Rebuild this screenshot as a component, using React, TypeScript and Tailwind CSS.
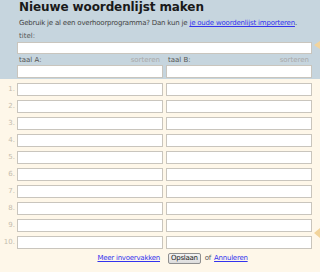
import React from "react";

const rows = [1, 2, 3, 4, 5, 6, 7, 8, 9, 10];

export default function App() {
  return (
    <div className="relative w-[320px] h-[272px] overflow-hidden bg-[#fef7e9] font-['DejaVu_Sans',sans-serif] text-[#333]">
      {/* kop */}
      <div className="bg-[#c6d5de] pl-[17px] pr-[8px] pt-[1px] pb-[1px]">
        <h1 className="pl-[2px] text-[12px] leading-[13px] font-bold tracking-[-0.1px] text-[#1a1a1a]">
          Nieuwe woordenlijst maken
        </h1>
        <p className="pl-[2px] mt-[5px] text-[7px] leading-[9px] tracking-[-0.2px] whitespace-nowrap text-[#444]">
          Gebruik je al een overhoorprogramma? Dan kun je{" "}
          <a href="#" className="text-[#3333ee] underline">
            je oude woordenlijst importeren
          </a>
          .
        </p>
        <div className="pl-[2px] mt-[4px] text-[7px] leading-[9px] text-[#555]">titel:</div>
        <input className="mt-[1px] block w-full h-[12px] bg-white border border-[#c9c5bd] outline-none" />
        <div className="mt-[2px] grid grid-cols-2 gap-[3px]">
          <div>
            <div className="flex justify-between px-[2px] pr-[3px] text-[7px] leading-[9px]">
              <span className="text-[#555]">taal A:</span>
              <span className="text-[#a9a9a9]">sorteren</span>
            </div>
            <input className="block w-full h-[13px] bg-white border border-[#c9c5bd] outline-none" />
          </div>
          <div>
            <div className="flex justify-between px-[2px] pr-[3px] text-[7px] leading-[9px]">
              <span className="text-[#555]">taal B:</span>
              <span className="text-[#a9a9a9]">sorteren</span>
            </div>
            <input className="block w-full h-[13px] bg-white border border-[#c9c5bd] outline-none" />
          </div>
        </div>
      </div>

      {/* woorden */}
      <div className="pt-[4px] pr-[8px] flex flex-col gap-[4px]">
        {rows.map((n) => (
          <div key={n} className="flex items-center">
            <span className="w-[17px] pr-[2px] text-right text-[7px] leading-[9px] text-[#c4bcae]">
              {n}.
            </span>
            <div className="flex-1 grid grid-cols-2 gap-[3px]">
              <input className="block w-full h-[13px] bg-white border border-[#c9c5bd] outline-none" />
              <input className="block w-full h-[13px] bg-white border border-[#c9c5bd] outline-none" />
            </div>
          </div>
        ))}
      </div>

      {/* knoppen */}
      <div className="mt-[4px] pl-[17px] pr-[8px] grid grid-cols-2 gap-[3px] text-[7px] leading-[9px] tracking-[-0.25px]">
        <div className="flex justify-end items-center pr-[3px]">
          <a href="#" className="text-[#3333ee] underline">
            Meer invoervakken
          </a>
        </div>
        <div className="flex items-center pl-[2px] gap-[4px]">
          <button className="h-[11px] px-[2px] text-[7px] leading-[9px] tracking-[-0.25px] text-[#222] bg-gradient-to-b from-[#f4f4f4] to-[#dcdcdc] border border-[#8f8f8f] rounded-[2px]">
            Opslaan
          </button>
          <span className="text-[#555]">of</span>
          <a href="#" className="-ml-[1px] text-[#3333ee] underline">
            Annuleren
          </a>
        </div>
      </div>

      {/* pijltjes van tooltips */}
      <div className="absolute right-0 top-[41px] w-0 h-0 border-y-[4px] border-y-transparent border-r-[6px] border-r-[#f2d49c]" />
      <div className="absolute right-0 top-[228px] w-0 h-0 border-y-[5px] border-y-transparent border-r-[6px] border-r-[#f2d49c]" />
    </div>
  );
}
